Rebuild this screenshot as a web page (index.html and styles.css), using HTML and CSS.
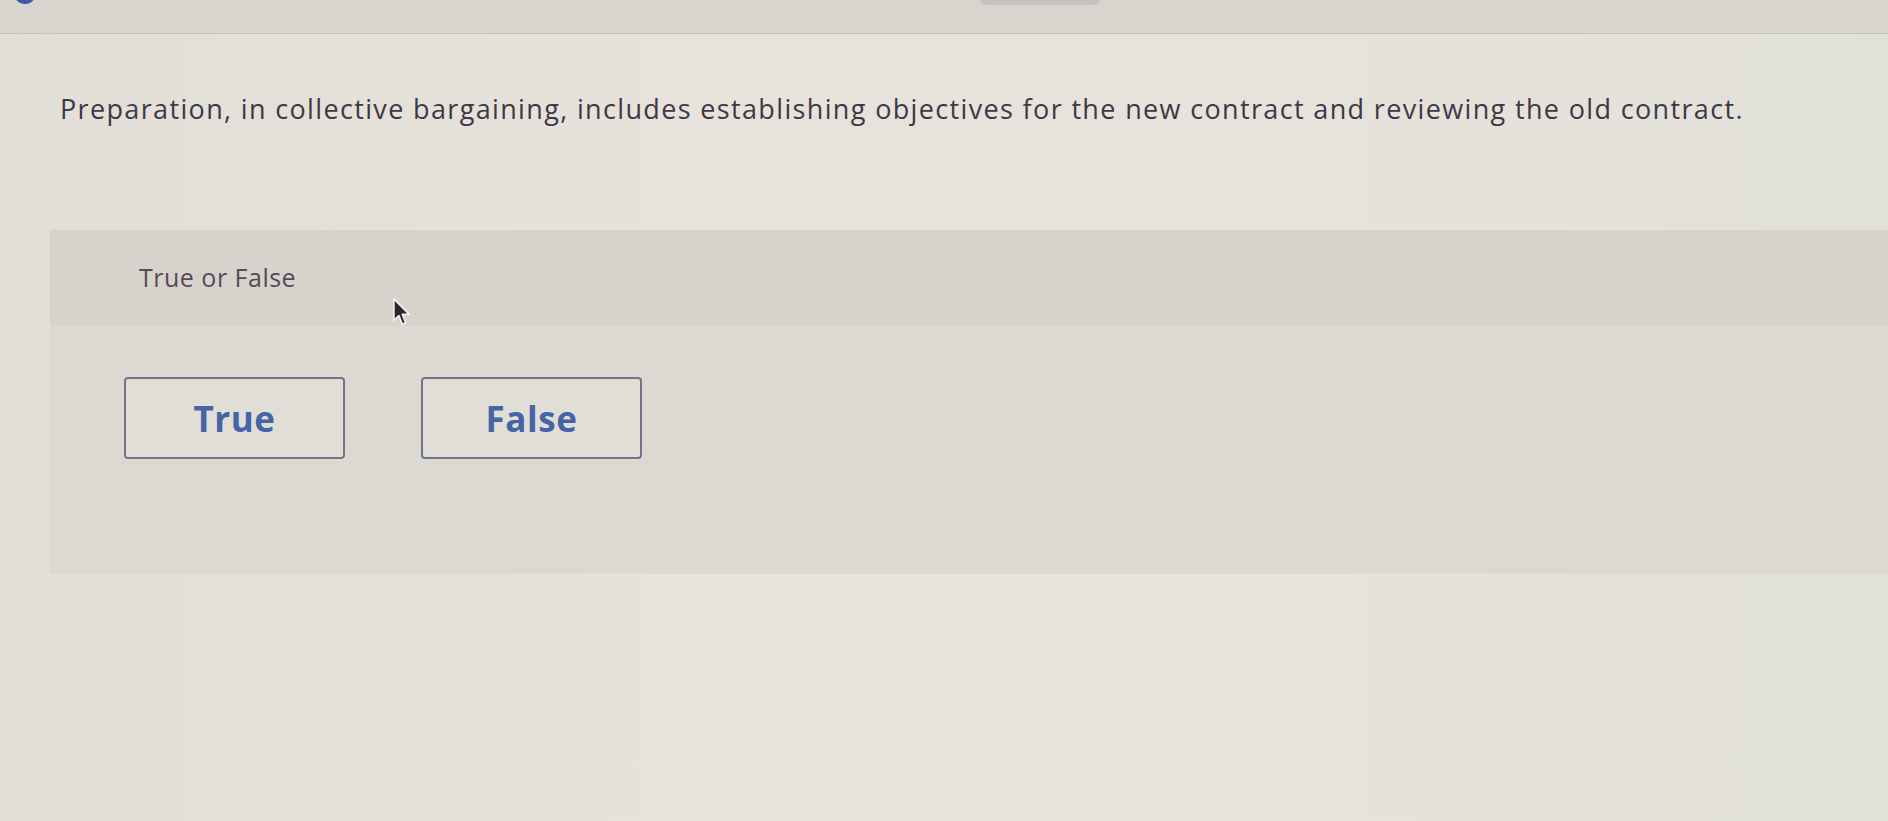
FILE: index.html
```html
<!DOCTYPE html>
<html lang="en">
<head>
<meta charset="utf-8">
<title>True or False</title>
<link rel="stylesheet" href="styles.css">
</head>
<body>
  <header class="topbar">
    <span class="topbar-dot"></span>
    <span class="topbar-tab"></span>
  </header>
  <main class="page">
    <p class="prompt">Preparation, in collective bargaining, includes establishing objectives for the new contract and reviewing the old contract.</p>
    <section class="question">
      <div class="question-head">True or False</div>
      <div class="question-body">
        <button class="choice" type="button">True</button>
        <button class="choice" type="button">False</button>
      </div>
    </section>
  </main>
  <svg class="pointer" width="22" height="32" viewBox="0 0 18 26" aria-hidden="true">
    <path d="M1.5 1.5 L1.5 19 L5.6 15.2 L8.4 22.2 L11.2 21 L8.5 14.2 L14 14 Z" fill="#2a2630" stroke="#f4f2ee" stroke-width="1.4" stroke-linejoin="round"/>
  </svg>
</body>
</html>
```

FILE: styles.css
```css
html, body {
  margin: 0;
  padding: 0;
}

body {
  position: relative;
  width: 1888px;
  height: 821px;
  overflow: hidden;
  font-family: "Open Sans", Lato, Arial, sans-serif;
  background: linear-gradient(90deg, #e2dfd8 0%, #e7e3dc 40%, #e6e3dc 60%, #e2e1d9 100%);
}

.topbar {
  position: relative;
  height: 33px;
  background: #d9d5ce;
  border-bottom: 1px solid #c8c4bd;
  display: flex;
}

.topbar-dot {
  position: absolute;
  left: 14px;
  top: -18px;
  width: 22px;
  height: 22px;
  border-radius: 50%;
  background: #3c5aa6;
}

.topbar-tab {
  position: absolute;
  left: 980px;
  top: 0;
  width: 120px;
  height: 5px;
  border-radius: 0 0 8px 8px;
  background: #c6c3c0;
}

.page {
  display: flex;
  flex-direction: column;
}

.prompt {
  margin: 0;
  padding: 58px 0 0 60px;
  font-size: 27px;
  line-height: 34px;
  letter-spacing: 1.35px;
  color: #3f3846;
  white-space: nowrap;
}

.question {
  margin: 104px 0 0 50px;
  display: flex;
  flex-direction: column;
}

.question-head {
  height: 96px;
  box-sizing: border-box;
  padding: 31px 0 0 89px;
  background: #d7d3cc;
  font-size: 25px;
  line-height: 32px;
  letter-spacing: 0.5px;
  color: #524c58;
}

.question-body {
  height: 248px;
  box-sizing: border-box;
  padding: 51px 0 0 74px;
  background: #dcd9d2;
  display: flex;
  align-items: flex-start;
  gap: 76px;
}

.choice {
  width: 221px;
  height: 82px;
  box-sizing: border-box;
  border: 2px solid #727390;
  border-radius: 4px;
  background: #e1ded7;
  font-family: "Open Sans", Lato, Arial, sans-serif;
  font-weight: 700;
  font-size: 35px;
  letter-spacing: 0.6px;
  color: #4664a8;
  padding: 0;
}

.pointer {
  position: absolute;
  left: 392px;
  top: 297px;
}
```
